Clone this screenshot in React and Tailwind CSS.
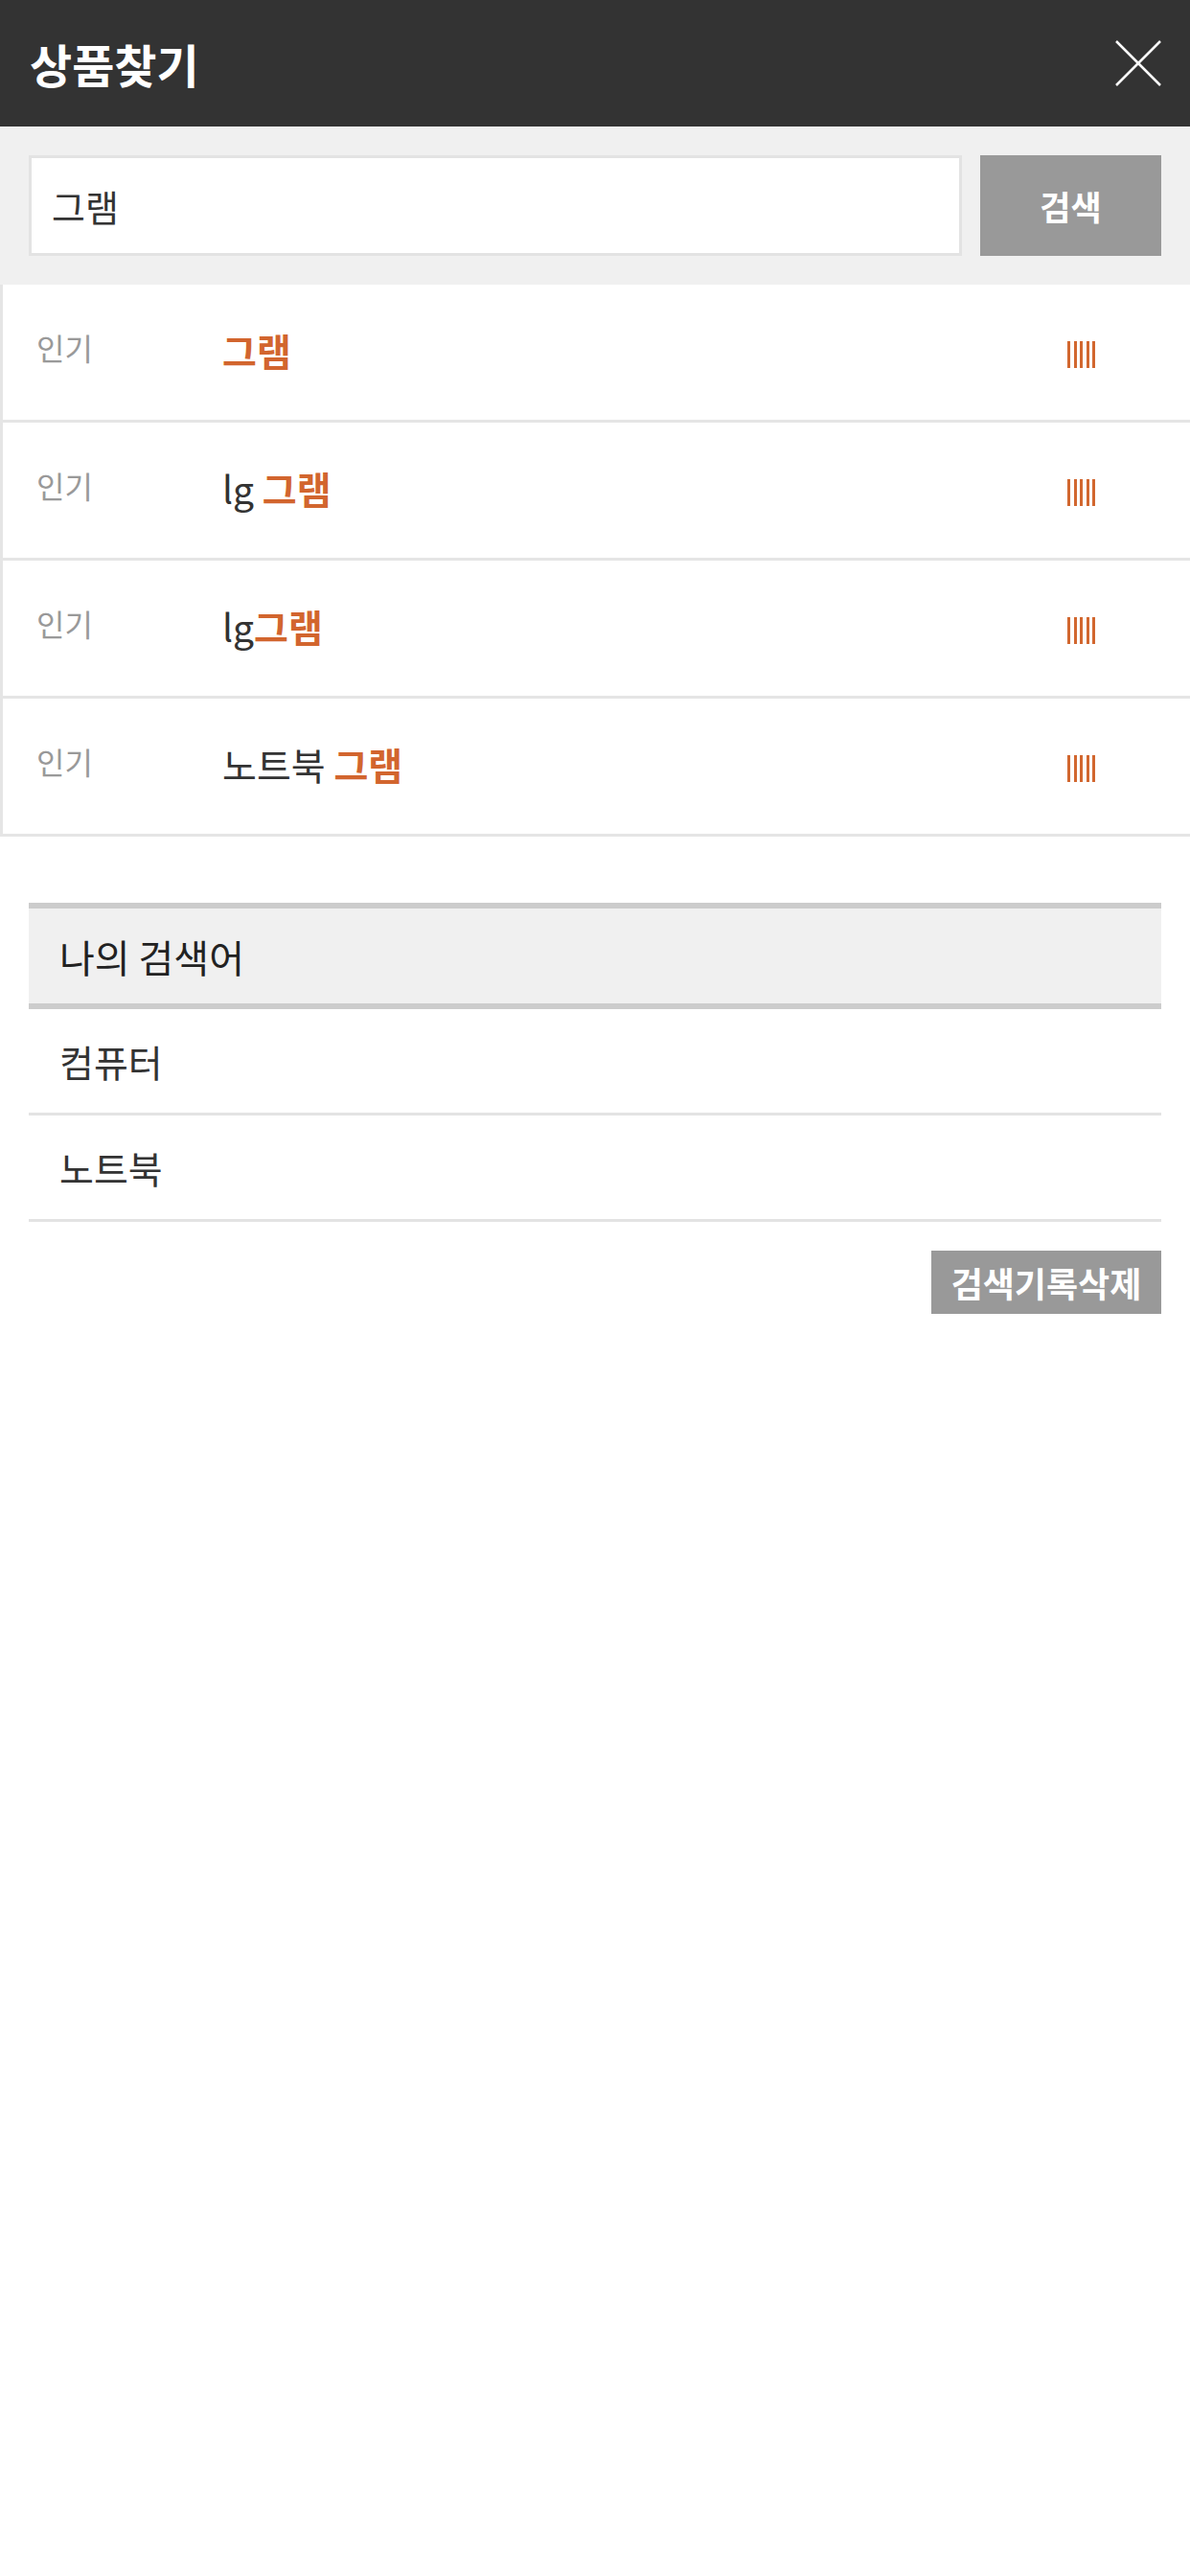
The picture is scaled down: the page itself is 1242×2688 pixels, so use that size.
const popular = [
  { pre: '', hit: '그램' },
  { pre: 'lg ', hit: '그램' },
  { pre: 'lg', hit: '그램' },
  { pre: '노트북 ', hit: '그램' },
];

const history = ['컴퓨터', '노트북'];

function Bars() {
  return (
    <div className="flex gap-[3.5px] h-[28px] mt-[4px]">
      {[0, 1, 2, 3, 4].map((i) => (
        <span key={i} className="w-[3px] h-full bg-[#d2672f]" />
      ))}
    </div>
  );
}

export default function App() {
  return (
    <div className="w-[1242px] min-h-[2688px] bg-white font-['Noto_Sans_CJK_KR',sans-serif]">
      {/* header */}
      <div className="h-[132px] bg-[#333333] flex items-center justify-between pl-[31px] pr-[30px]">
        <h1 className="text-[48px] font-bold text-white leading-none">상품찾기</h1>
        <svg width="48" height="48" viewBox="0 0 48 48" fill="none" stroke="white" strokeWidth="2.5">
          <line x1="1" y1="1" x2="47" y2="47" />
          <line x1="47" y1="1" x2="1" y2="47" />
        </svg>
      </div>

      {/* search */}
      <div className="bg-[#f0f0f0] px-[30px] py-[30px] flex">
        <div className="flex-1 h-[105px] border-[3px] border-[#e3e3e3] bg-white flex items-center pl-[21px]">
          <span className="text-[38px] text-[#333] leading-none">그램</span>
        </div>
        <button className="w-[189px] h-[105px] ml-[19px] bg-[#999999] text-white text-[35px] font-bold leading-none flex items-center justify-center">
          검색
        </button>
      </div>

      {/* popular keywords */}
      <div>
        {popular.map((p, i) => (
          <div key={i} className="h-[144px] border-l-[3px] border-b-[3px] border-[#e5e5e5] flex items-center pl-[35px]">
            <span className="w-[194px] text-[32px] text-[#999] leading-none -mt-[12px]">인기</span>
            <span className="flex-1 text-[39px] leading-none text-[#333] -mt-[4px]">
              {p.pre}
              <span className="text-[#d2652e] font-semibold">{p.hit}</span>
            </span>
            <div className="mr-[99px]">
              <Bars />
            </div>
          </div>
        ))}
      </div>

      {/* my searches */}
      <div className="mx-[30px] mt-[69px]">
        <div className="h-[111px] border-y-[6px] border-[#cccccc] bg-[#f0f0f0] flex items-center pl-[32px]">
          <span className="text-[40px] text-[#222] leading-none">나의 검색어</span>
        </div>
        {history.map((h) => (
          <div key={h} className="h-[111px] border-b-[3px] border-[#e3e3e3] flex items-center pl-[32px]">
            <span className="text-[39px] text-[#333] leading-none">{h}</span>
          </div>
        ))}
        <div className="flex justify-end mt-[30px]">
          <button className="h-[66px] w-[240px] bg-[#999999] text-white text-[36px] font-bold leading-none flex items-center justify-center">
            검색기록삭제
          </button>
        </div>
      </div>
    </div>
  );
}
